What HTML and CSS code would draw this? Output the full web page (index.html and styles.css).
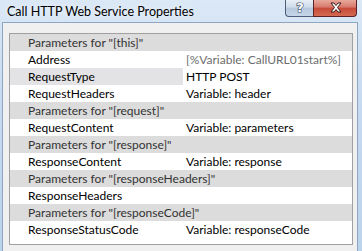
FILE: index.html
```html
<!DOCTYPE html>
<html>
<head>
<meta charset="utf-8">
<link rel="stylesheet" href="styles.css">
</head>
<body>
<div class="window">
  <div class="titlebar">
    <div class="title">Call HTTP Web Service Properties</div>
    <div class="caption-buttons">
      <div class="btn help">
        <svg width="28" height="17" viewBox="0 0 28 17"><text x="14" y="13" text-anchor="middle" class="glyph">?</text></svg>
      </div>
      <div class="btn close">
        <svg width="44" height="17" viewBox="0 0 44 17"><path d="M17 4 L20 4 L22 6.5 L24 4 L27 4 L23.5 8.5 L27 13 L24 13 L22 10.5 L20 13 L17 13 L20.5 8.5 Z" class="xglyph"/></svg>
      </div>
    </div>
  </div>
  <div class="client">
    <div class="grid">
      <div class="row cat"><span class="name">Parameters for "[this]"</span></div>
      <div class="row"><span class="name">Address</span><span class="value dim">[%Variable: CallURL01start%]</span></div>
      <div class="row sel"><span class="name">RequestType</span><span class="value">HTTP POST</span></div>
      <div class="row"><span class="name">RequestHeaders</span><span class="value">Variable: header</span></div>
      <div class="row cat"><span class="name">Parameters for "[request]"</span></div>
      <div class="row"><span class="name">RequestContent</span><span class="value">Variable: parameters</span></div>
      <div class="row cat"><span class="name">Parameters for "[response]"</span></div>
      <div class="row"><span class="name">ResponseContent</span><span class="value">Variable: response</span></div>
      <div class="row cat"><span class="name">Parameters for "[responseHeaders]"</span></div>
      <div class="row"><span class="name">ResponseHeaders</span><span class="value"></span></div>
      <div class="row cat"><span class="name">Parameters for "[responseCode]"</span></div>
      <div class="row"><span class="name">ResponseStatusCode</span><span class="value">Variable: responseCode</span></div>
    </div>
  </div>
</div>
</body>
</html>
```
FILE: styles.css
```css
html, body {
  margin: 0;
  padding: 0;
}
body {
  width: 362px;
  height: 251px;
  overflow: hidden;
  font-family: Lato, "Noto Sans", sans-serif;
  font-size: 12px;
}
.window {
  width: 362px;
  height: 251px;
  display: flex;
  flex-direction: column;
  background: linear-gradient(to bottom, #dbe8f6 0%, #c6daf0 40%, #bcd3ec 100%);
}
.titlebar {
  height: 22px;
  display: flex;
  align-items: flex-start;
  justify-content: space-between;
  flex: none;
}
.title {
  padding: 4px 0 0 7px;
  color: #000;
  font-size: 12.5px;
  line-height: 15px;
  text-shadow: 0 0 6px rgba(255,255,255,0.9);
}
.caption-buttons {
  display: flex;
  margin-right: 5px;
}
.btn {
  height: 17px;
  border: 1px solid #4e5e77;
  border-top: none;
  box-sizing: border-box;
}
.help {
  width: 28px;
  border-radius: 0 0 0 4px;
  border-right: none;
  background: linear-gradient(to bottom, #e7eef7 0%, #cfdceb 45%, #b6c8de 50%, #c5d6ea 100%);
}
.close {
  width: 44px;
  border-radius: 0 0 4px 0;
  border-color: #5a2226;
  background: linear-gradient(to bottom, #e9a99c 0%, #d7786b 45%, #c74a38 50%, #d36a52 100%);
}
.btn svg {
  display: block;
  margin-top: -1px;
}
.glyph {
  font-family: "DejaVu Sans", sans-serif;
  font-weight: bold;
  font-size: 13px;
  fill: #fff;
  stroke: #3b4a60;
  stroke-width: 1.2px;
  paint-order: stroke;
}
.xglyph {
  fill: #fff;
  stroke: #3d1a1a;
  stroke-width: 1;
}
.client {
  flex: 1;
  margin: 0 4px 0 2px;
  border-top: 1px solid #8fa6c3;
  border-left: 1px solid #8fa6c3;
  border-right: 1px solid #8fa6c3;
  background: #f0f0f0;
  padding: 10px 4px 6px 6px;
  display: flex;
  flex-direction: column;
}
.grid {
  flex: 1;
  border: 1px solid #a0a0a0;
  background: #fff;
}
.row {
  height: 17px;
  display: flex;
  align-items: center;
  line-height: 17px;
  white-space: nowrap;
}
.name {
  width: 155px;
  padding-left: 18px;
  flex: none;
  color: #000;
}
.value {
  padding-left: 3px;
  color: #000;
}
.value.dim {
  color: #6d6d6d;
}
.row.cat {
  background: #dcdcdc;
}
.row.cat .name {
  color: #333;
  width: auto;
}
.row.sel .name {
  background: #e3e3e6;
}
```
